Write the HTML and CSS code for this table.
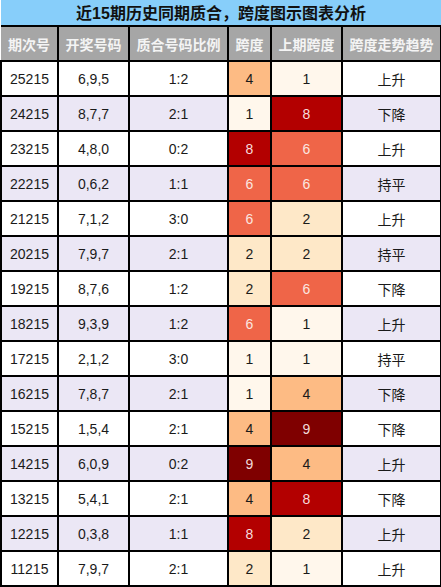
FILE: index.html
```html
<!DOCTYPE html>
<html lang="zh">
<head>
<meta charset="utf-8">
<link rel="stylesheet" href="styles.css">
</head>
<body>
<table class="grid">
  <colgroup>
    <col class="c1"><col class="c2"><col class="c3"><col class="c4"><col class="c5"><col class="c6">
  </colgroup>
  <tr class="title-row"><td colspan="6" class="title">近15期历史同期质合，跨度图示图表分析</td></tr>
  <tr class="head">
    <th>期次号</th><th>开奖号码</th><th>质合号码比例</th><th>跨度</th><th>上期跨度</th><th>跨度走势趋势</th>
  </tr>
  <tr><td>25215</td><td>6,9,5</td><td>1:2</td><td class="v4">4</td><td class="v1">1</td><td class="cn">上升</td></tr>
  <tr class="alt"><td>24215</td><td>8,7,7</td><td>2:1</td><td class="v1">1</td><td class="v8">8</td><td class="cn">下降</td></tr>
  <tr><td>23215</td><td>4,8,0</td><td>0:2</td><td class="v8">8</td><td class="v6">6</td><td class="cn">上升</td></tr>
  <tr class="alt"><td>22215</td><td>0,6,2</td><td>1:1</td><td class="v6">6</td><td class="v6">6</td><td class="cn">持平</td></tr>
  <tr><td>21215</td><td>7,1,2</td><td>3:0</td><td class="v6">6</td><td class="v2">2</td><td class="cn">上升</td></tr>
  <tr class="alt"><td>20215</td><td>7,9,7</td><td>2:1</td><td class="v2">2</td><td class="v2">2</td><td class="cn">持平</td></tr>
  <tr><td>19215</td><td>8,7,6</td><td>1:2</td><td class="v2">2</td><td class="v6">6</td><td class="cn">下降</td></tr>
  <tr class="alt"><td>18215</td><td>9,3,9</td><td>1:2</td><td class="v6">6</td><td class="v1">1</td><td class="cn">上升</td></tr>
  <tr><td>17215</td><td>2,1,2</td><td>3:0</td><td class="v1">1</td><td class="v1">1</td><td class="cn">持平</td></tr>
  <tr class="alt"><td>16215</td><td>7,8,7</td><td>2:1</td><td class="v1">1</td><td class="v4">4</td><td class="cn">下降</td></tr>
  <tr><td>15215</td><td>1,5,4</td><td>2:1</td><td class="v4">4</td><td class="v9">9</td><td class="cn">下降</td></tr>
  <tr class="alt"><td>14215</td><td>6,0,9</td><td>0:2</td><td class="v9">9</td><td class="v4">4</td><td class="cn">上升</td></tr>
  <tr><td>13215</td><td>5,4,1</td><td>2:1</td><td class="v4">4</td><td class="v8">8</td><td class="cn">下降</td></tr>
  <tr class="alt"><td>12215</td><td>0,3,8</td><td>1:1</td><td class="v8">8</td><td class="v2">2</td><td class="cn">上升</td></tr>
  <tr><td>11215</td><td>7,9,7</td><td>2:1</td><td class="v2">2</td><td class="v1">1</td><td class="cn">上升</td></tr>
</table>
</body>
</html>
```
FILE: styles.css
```css
html, body {
  margin: 0;
  padding: 0;
  background: #ffffff;
}
.grid {
  width: 440px;
  table-layout: fixed;
  border-collapse: collapse;
  font-family: "Liberation Sans", "Noto Sans CJK SC", sans-serif;
  font-size: 14px;
  color: #1a1a1a;
}
.c1 { width: 57px; }
.c2 { width: 71px; }
.c3 { width: 99px; }
.c4 { width: 43px; }
.c5 { width: 71px; }
.c6 { width: 99px; }
.grid td, .grid th {
  border: 2px solid #000;
  padding: 0;
  text-align: center;
  vertical-align: middle;
  height: 33px;
  box-sizing: border-box;
}
.grid tr { height: 35px; }
.grid .title-row { height: 25px; }
.grid .title {
  height: 24px;
  background: #87cefa;
  border-top: none;
  border-left: none;
  border-right: none;
  font-family: "Liberation Sans", "Noto Sans CJK SC", sans-serif;
  font-weight: bold;
  font-size: 16px;
  color: #111;
  padding-bottom: 1px;
}
.head th {
  background: #a6a6a6;
  color: #f4f4f4;
  font-weight: bold;
  font-size: 14px;
  font-family: "Noto Sans CJK SC", sans-serif;
}
.head th:first-child { border-left: none; }
.alt td { background: #ebe7f5; }
.grid td.cn {
  font-family: "Noto Sans CJK SC", sans-serif;
  font-size: 14px;
}
.grid td.v1 { background: #fff7ec; }
.grid td.v2 { background: #fee8c8; }
.grid td.v4 { background: #fdbb84; }
.grid td.v6 { background: #ef6548; color: #fbe7e0; }
.grid td.v8 { background: #b30000; color: #f7dcdc; }
.grid td.v9 { background: #7f0000; color: #f2dada; }
```
